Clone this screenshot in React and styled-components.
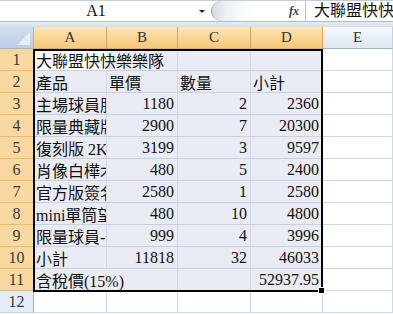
import React from "react";
import styled, { createGlobalStyle } from "styled-components";

const Global = createGlobalStyle`
  html, body { margin: 0; padding: 0; background: #fff; overflow: hidden; }
  #root { width: 393px; height: 314px; overflow: hidden; }
`;

const FONT = `"Liberation Serif", "Noto Sans CJK TC", serif`;

const Page = styled.div`
  width: 393px;
  height: 314px;
  overflow: hidden;
  font-family: ${FONT};
`;

const FormulaBar = styled.div`
  display: flex;
  align-items: stretch;
  height: 22px;
  box-sizing: border-box;
  border-top: 1px solid #c3ccd8;
  border-bottom: 1px solid #aebccd;
  background: #fff;
`;

const NameBox = styled.div`
  position: relative;
  width: 208px;
  display: flex;
  align-items: center;
  flex-shrink: 0;
`;

const NameText = styled.div`
  width: 192px;
  text-align: center;
  font-size: 16px;
  color: #111;
  line-height: 20px;
`;

const DropArrow = styled.div`
  width: 0;
  height: 0;
  margin-left: 7px;
  border-left: 3px solid transparent;
  border-right: 3px solid transparent;
  border-top: 3px solid #222;
`;

const Expander = styled.div`
  width: 40px;
  margin: 0 0 0 3px;
  border-radius: 11px 0 0 11px;
  border-left: 1px solid #9ba7b6;
  background: linear-gradient(90deg, #d4dae2 0%, #eef1f5 35%, #ffffff 100%);
  flex-shrink: 0;
`;

const FxLabel = styled.div`
  width: 54px;
  display: flex;
  align-items: center;
  justify-content: flex-end;
  padding-right: 6px;
  box-sizing: border-box;
  font-family: "Liberation Serif", serif;
  font-style: italic;
  font-weight: bold;
  font-size: 12px;
  color: #3c3c3c;
  border-right: 1px solid #b9c4d1;
  flex-shrink: 0;
`;

const FormulaInput = styled.div`
  flex: 1;
  padding-left: 8px;
  font-size: 16px;
  line-height: 20px;
  white-space: nowrap;
  overflow: hidden;
  color: #111;
`;

const Spacer = styled.div`
  height: 5px;
  background: linear-gradient(#e6ebf2, #d6dee8);
`;

const SheetWrap = styled.div`
  position: relative;
`;

const Grid = styled.div`
  display: grid;
  grid-template-columns: 34px 73px 71px 73px 72px 1fr;
  grid-auto-rows: 22px;
`;

const Corner = styled.div`
  position: relative;
  box-sizing: border-box;
  background: linear-gradient(#d3def0, #bccde6);
  border-right: 1px solid #9eb6ce;
  border-bottom: 1px solid #9eb6ce;
  &::after {
    content: "";
    position: absolute;
    right: 3px;
    bottom: 3px;
    width: 0;
    height: 0;
    border-left: 13px solid transparent;
    border-bottom: 13px solid #e6edf6;
  }
`;

const ColHead = styled.div`
  box-sizing: border-box;
  display: flex;
  align-items: center;
  justify-content: center;
  font-size: 15px;
  color: #333;
  border-right: 1px solid ${(p) => (p.$on ? "#dca65a" : "#c5d1df")};
  border-bottom: 1px solid ${(p) => (p.$on ? "#e2ad5e" : "#9eb6ce")};
  background: ${(p) =>
    p.$on
      ? "linear-gradient(#fce4b8 0%, #f9d597 50%, #f6c97c 100%)"
      : "linear-gradient(#f6f8fc 0%, #e9eff7 50%, #e0e8f2 100%)"};
`;

const RowHead = styled.div`
  box-sizing: border-box;
  display: flex;
  align-items: center;
  justify-content: center;
  font-size: 16px;
  color: #3a3a3a;
  border-right: 1px solid #9eb6ce;
  border-bottom: 1px solid ${(p) => (p.$on ? "#edbb6f" : "#c5d1df")};
  background: ${(p) => (p.$on ? "#f9d9a1" : "#e4ecf7")};
`;

const Cell = styled.div`
  box-sizing: border-box;
  display: flex;
  align-items: center;
  justify-content: ${(p) => (p.$right ? "flex-end" : "flex-start")};
  padding: 0 3px 0 2px;
  font-size: 16px;
  color: #111;
  white-space: nowrap;
  overflow: ${(p) => (p.$spill ? "visible" : "hidden")};
  z-index: ${(p) => (p.$spill ? 1 : "auto")};
  background: ${(p) => (p.$sel ? (p.$active ? "#ffffff" : "#e9ecf5") : "#ffffff")};
  border-right: 1px solid
    ${(p) => (p.$noRight ? "transparent" : p.$sel ? "#d2d7e3" : "#d0d7e5")};
  border-bottom: 1px solid ${(p) => (p.$sel ? "#c9cfdc" : "#d0d7e5")};
  letter-spacing: 0;
`;

const Selection = styled.div`
  position: absolute;
  left: 33px;
  top: 22px;
  width: 290px;
  height: 243px;
  box-sizing: border-box;
  border: 2px solid #000;
  pointer-events: none;
  z-index: 3;
`;

const FillHandle = styled.div`
  position: absolute;
  right: -4px;
  bottom: -4px;
  width: 5px;
  height: 5px;
  background: #000;
  border: 1px solid #fff;
`;

const rows = [
  { n: 1, a: "大聯盟快快樂樂隊", spill: true },
  { n: 2, a: "產品", b: "單價", c: "數量", d: "小計", text: true },
  { n: 3, a: "主場球員服", b: "1180", c: "2", d: "2360" },
  { n: 4, a: "限量典藏版", b: "2900", c: "7", d: "20300" },
  { n: 5, a: "復刻版 2K球衣", b: "3199", c: "3", d: "9597" },
  { n: 6, a: "肖像白樺木球棒", b: "480", c: "5", d: "2400" },
  { n: 7, a: "官方版簽名球", b: "2580", c: "1", d: "2580" },
  { n: 8, a: "mini單筒望遠鏡", b: "480", c: "10", d: "4800" },
  { n: 9, a: "限量球員-公仔", b: "999", c: "4", d: "3996" },
  { n: 10, a: "小計", b: "11818", c: "32", d: "46033" },
  { n: 11, a: "含稅價(15%)", d: "52937.95", spill: true },
];

const cols = ["A", "B", "C", "D", "E"];

export default function App() {
  return (
    <Page>
      <Global />
      <FormulaBar>
        <NameBox>
          <NameText>A1</NameText>
          <DropArrow />
        </NameBox>
        <Expander />
        <FxLabel>fx</FxLabel>
        <FormulaInput>大聯盟快快樂樂隊</FormulaInput>
      </FormulaBar>
      <Spacer />
      <SheetWrap>
        <Grid>
          <Corner />
          {cols.map((c, i) => (
            <ColHead key={c} $on={i < 4}>
              {c}
            </ColHead>
          ))}
          {rows.map((r) => (
            <React.Fragment key={r.n}>
              <RowHead $on>{r.n}</RowHead>
              <Cell $sel $active={r.n === 1} $spill={r.spill} $noRight={r.spill}>
                {r.a}
              </Cell>
              <Cell $sel $right={!r.text}>{r.b || ""}</Cell>
              <Cell $sel $right={!r.text}>{r.c || ""}</Cell>
              <Cell $sel $right={!r.text}>{r.d || ""}</Cell>
              <Cell />
            </React.Fragment>
          ))}
          <RowHead>12</RowHead>
          <Cell />
          <Cell />
          <Cell />
          <Cell />
          <Cell />
        </Grid>
        <Selection>
          <FillHandle />
        </Selection>
      </SheetWrap>
    </Page>
  );
}
